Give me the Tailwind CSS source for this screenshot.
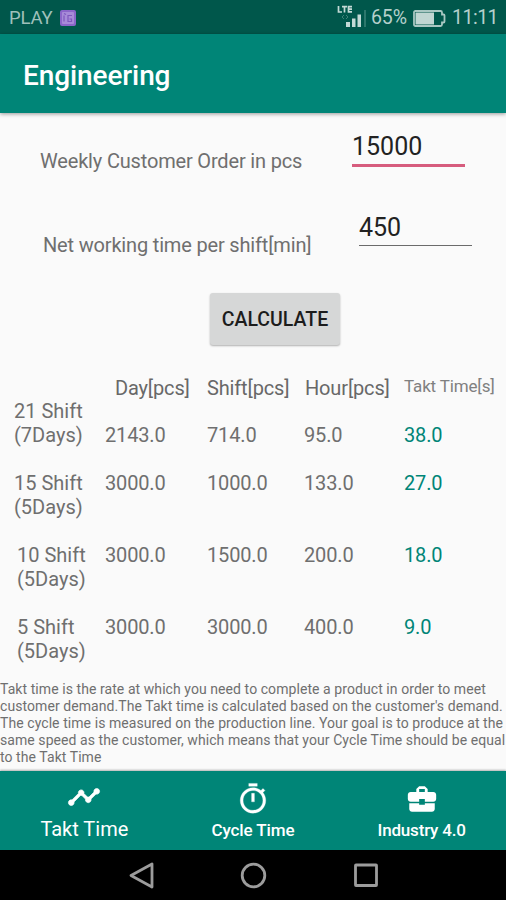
<!DOCTYPE html>
<html lang="en">
  <head>
    <meta charset="UTF-8" />
    <meta name="viewport" content="width=device-width, initial-scale=1.0" />
    <title>Engineering</title>
    <script src="https://cdn.jsdelivr.net/npm/@tailwindcss/browser@4"></script>
  </head>
  <body class="bg-black">
    <div class="flex flex-col w-[506px] h-[900px] overflow-hidden bg-[#fafafa] font-['Roboto',sans-serif] text-[#6f6f6f] whitespace-nowrap">
      <!-- status bar -->
      <div class="flex items-center h-[34px] shrink-0 bg-[#00574b] text-[#b5d0cb] pl-[9px] pr-[9px] pt-0.5">
        <span class="w-[43px] text-[18.500px] leading-none tracking-[-0.2px] text-[#9fc0ba]">PLAY</span>
        <svg class="ml-2 w-4 h-4" viewBox="0 0 16 16">
          <rect width="16" height="16" rx="2" fill="#8b66c9" />
          <rect x="2" y="2" width="12" height="12" rx="1" fill="#a78bd8" />
          <path d="M4 5.500v6M12 5.500H8v6h3.500V9H9.500M4 3.500l2 1" stroke="#7d58bd" stroke-width="1.200" fill="none" />
        </svg>
        <svg class="ml-auto w-[30px] h-[24px] -mt-1" viewBox="0 0 30 24">
          <path d="M1.500 2v6h3.500M5 2.600h5M7.500 2.600v5.900M15 2.600h-3.500v5.300H15M11.500 5.200H15" stroke="#c3dad6" stroke-width="1.700" fill="none" />
          <path d="M7 11l-2 2 2 2M9 11l2 2-2 2" stroke="#3f8177" stroke-width="1" fill="none" />
          <path d="M9 18h4v5H9zM15 14.500h3.500V23H15zM20.500 10.500H24V23h-3.500z" fill="#c3dad6" />
          <path d="M27 6h2v17h-2z" fill="#2c776c" />
        </svg>
        <span class="ml-1 w-[38px] text-[19.500px] leading-none tracking-[-0.1px]">65%</span>
        <svg class="ml-1 w-[33px] h-[17px]" viewBox="0 0 33 17">
          <path d="M2.500 1h25q1.500 0 1.500 1.500v2h1.500q1 0 1 1v6q0 1-1 1H29v2q0 1.500-1.500 1.500h-25Q1 16 1 14.500v-12Q1 1 2.500 1z" stroke="#a9c8c3" stroke-width="1.800" fill="none" />
          <path d="M2.500 2.500h18.500v12H2.500z" fill="#c0d6d2" />
        </svg>
        <span class="ml-1.5 w-[45px] text-[19.500px] leading-none tracking-[-0.5px]">11:11</span>
      </div>

      <!-- app bar -->
      <div class="flex items-center h-[79px] shrink-0 bg-[#008577] pl-[23px] pt-1 shadow-[0_1px_4px_rgba(0,0,0,0.4)]">
        <h1 class="text-[28px] font-medium tracking-[-0.1px] text-white">Engineering</h1>
      </div>

      <!-- form -->
      <div class="flex items-start h-[84px] shrink-0 pl-10 pt-4">
        <label class="w-[312px] pt-[20px] text-[20px] leading-6 tracking-[-0.17px]">Weekly Customer Order in pcs</label>
        <div class="w-[113px] h-[38px] border-b-[3px] border-[#d65c7d] text-[25px] leading-[36px] text-[#222]">15000</div>
      </div>
      <div class="flex items-start h-[96px] shrink-0 pl-[43px] pt-3">
        <label class="w-[316px] pt-6 text-[20px] leading-6 tracking-[-0.17px]">Net working time per shift[min]</label>
        <div class="w-[113px] h-[37px] border-b border-[#6b6b6b] text-[25px] leading-[38px] text-[#222]">450</div>
      </div>
      <button class="ml-[210px] w-[130px] h-[52px] shrink-0 rounded-[3px] bg-[#d6d7d7] pt-0.5 text-[19.500px] font-medium text-[#1c1c1c] shadow-[0_1px_2px_rgba(0,0,0,0.3)]">
        CALCULATE
      </button>

      <!-- results -->
      <div class="mt-[31px] text-[20px] leading-[23.500px] tracking-[-0.15px]">
        <div class="grid grid-cols-[115px_92px_98px_99px_1fr] h-6 pt-px text-[#686868]">
          <span></span>
          <span>Day[pcs]</span>
          <span>Shift[pcs]</span>
          <span>Hour[pcs]</span>
          <span class="text-[17px] leading-[18px] text-[#808080]">Takt Time[s]</span>
        </div>
        <div class="grid grid-cols-[105px_102px_97px_100px_1fr] items-end h-[47px]">
          <div class="pl-3.5 tracking-normal"><p>21 Shift</p><p>(7Days)</p></div>
          <span>2143.0</span>
          <span>714.0</span>
          <span>95.0</span>
          <span class="text-[#008577]">38.0</span>
        </div>
        <div class="grid grid-cols-[105px_102px_97px_100px_1fr] h-[97px] pt-[25px]">
          <div class="pl-3.5 tracking-normal"><p>15 Shift</p><p>(5Days)</p></div>
          <span>3000.0</span>
          <span>1000.0</span>
          <span>133.0</span>
          <span class="text-[#008577]">27.0</span>
        </div>
        <div class="grid grid-cols-[105px_102px_97px_100px_1fr] h-[72px]">
          <div class="pl-[17px] tracking-normal"><p>10 Shift</p><p>(5Days)</p></div>
          <span>3000.0</span>
          <span>1500.0</span>
          <span>200.0</span>
          <span class="text-[#008577]">18.0</span>
        </div>
        <div class="grid grid-cols-[105px_102px_97px_100px_1fr] h-[65px]">
          <div class="pl-[17px] tracking-normal"><p>5 Shift</p><p>(5Days)</p></div>
          <span>3000.0</span>
          <span>3000.0</span>
          <span>400.0</span>
          <span class="text-[#008577]">9.0</span>
        </div>
      </div>

      <div class="text-[14px] leading-[16.900px] tracking-[0.07px]">
        <p>Takt time is the rate at which you need to complete a product in order to meet</p>
        <p>customer demand.The Takt time is calculated based on the customer's demand.</p>
        <p>The cycle time is measured on the production line. Your goal is to produce at the</p>
        <p>same speed as the customer, which means that your Cycle Time should be equal</p>
        <p>to the Takt Time</p>
      </div>

      <!-- bottom navigation -->
      <div class="mt-auto grid grid-cols-3 h-[79px] shrink-0 bg-[#008577] text-white shadow-[0_-1px_2px_rgba(0,0,0,0.3)]">
        <div class="flex flex-col items-center pt-[9px]">
          <svg class="w-[34px] h-[34px]" viewBox="0 0 24 24" fill="currentColor">
            <path d="M23 8c0 1.100-.9 2-2 2-.18 0-.35-.02-.51-.07l-3.560 3.550c.05.16.07.34.07.52 0 1.100-.9 2-2 2s-2-.9-2-2c0-.18.02-.36.07-.52l-2.550-2.550c-.16.05-.34.07-.52.07s-.36-.02-.52-.07l-4.550 4.560c.05.16.07.33.07.51 0 1.100-.9 2-2 2s-2-.9-2-2 .9-2 2-2c.18 0 .35.02.51.07l4.560-4.550C8.020 9.360 8 9.180 8 9c0-1.100.9-2 2-2s2 .9 2 2c0 .18-.02.36-.07.52l2.550 2.550c.16-.05.34-.07.52-.07s.36.02.52.07l3.550-3.560C19.020 8.350 19 8.180 19 8c0-1.100.9-2 2-2s2 .9 2 2z" stroke="currentColor" stroke-width="0.500" />
          </svg>
          <span class="mt-[3px] text-[20px] leading-6">Takt Time</span>
        </div>
        <div class="flex flex-col items-center pt-[11px]">
          <svg class="w-[34px] h-[34px]" viewBox="0 0 24 24" fill="currentColor">
            <path d="M15 1H9v2h6V1zm-4 13h2V8h-2v6zm8.030-6.610l1.420-1.420c-.43-.51-.9-.99-1.410-1.410l-1.420 1.420C16.070 4.740 14.120 4 12 4c-4.970 0-9 4.030-9 9s4.020 9 9 9 9-4.030 9-9c0-2.120-.74-4.070-1.970-5.610zM12 20c-3.870 0-7-3.130-7-7s3.130-7 7-7 7 3.130 7 7-3.130 7-7 7z" stroke="currentColor" stroke-width="0.200" />
          </svg>
          <span class="mt-0.5 text-[17px] leading-6 font-medium tracking-[-0.1px]">Cycle Time</span>
        </div>
        <div class="flex flex-col items-center pt-[11px]">
          <svg class="w-[34px] h-[34px]" viewBox="0 0 24 24" fill="currentColor">
            <path d="M10 16v-1H3.010L3 19c0 1.110.89 2 2 2h14c1.110 0 2-.89 2-2v-4h-7v1h-4zm10-9h-4.010V5l-2-2h-4l-2 2v2H4c-1.100 0-2 .9-2 2v3c0 1.110.89 2 2 2h6v-2h4v2h6c1.100 0 2-.9 2-2V9c0-1.100-.9-2-2-2zm-6 0h-4V5h4v2z" />
          </svg>
          <span class="mt-0.5 text-[17px] leading-6 font-medium tracking-[-0.2px]">Industry 4.0</span>
        </div>
      </div>

      <!-- system buttons -->
      <div class="flex items-start h-[50px] shrink-0 bg-black pt-3 pl-[128px]">
        <svg class="w-[250px] h-[27px]" viewBox="0 0 250 27" fill="none" stroke="#9c9c9c" stroke-width="2.800">
          <path d="M24 2v23L3 13.500z" stroke-linejoin="round" />
          <circle cx="125.500" cy="13.500" r="11.300" />
          <rect x="227.500" y="3" width="21" height="20.500" rx="0.500" />
        </svg>
      </div>
    </div>
  </body>
</html>
